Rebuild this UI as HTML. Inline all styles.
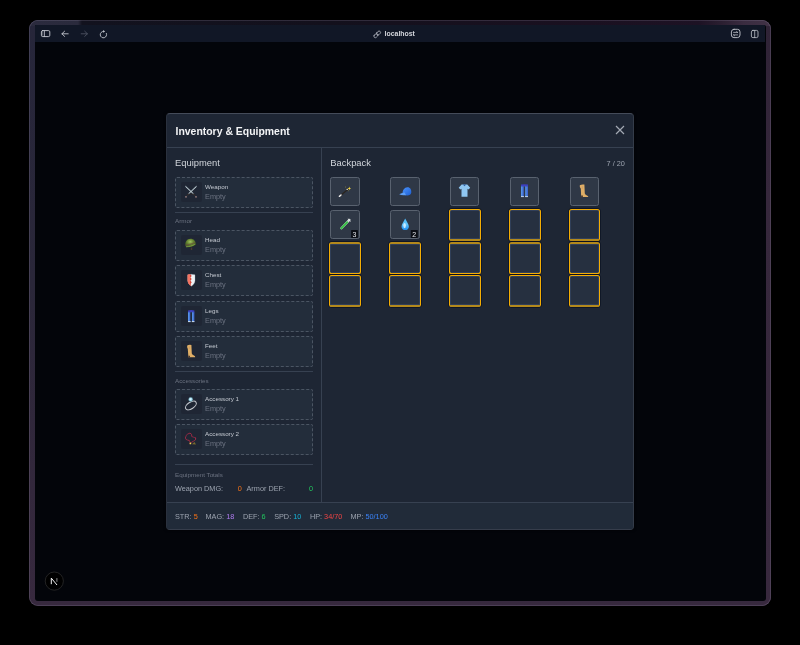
<!DOCTYPE html>
<html><head><meta charset="utf-8">
<style>
*{box-sizing:border-box;margin:0;padding:0}
html,body{width:800px;height:645px;overflow:hidden;background:#000}
body{position:relative;font-family:"Liberation Sans",sans-serif;-webkit-font-smoothing:antialiased}
.abs{position:absolute}
#frame{left:29px;top:20px;width:742px;height:586.4px;border-radius:9px;
  background:linear-gradient(180deg,#26263a 0%,#2a2739 45%,#33283c 80%,#37293e 100%);overflow:hidden}
#fright{right:0;top:0;width:8px;height:586.4px;background:linear-gradient(180deg,#2f2336 0%,#36283c 30%,#38293e 100%)}
#ftop{left:0;top:0;width:742px;height:6px;background:linear-gradient(90deg,#2b2b3e 0px,#2a2a3c 49px,#12121e 53px,#13101c 300px,#1a1020 560px,#1d1224 670px,#2c2032 695px,#3a2c40 715px,#413246 742px)}
#fhl{left:29px;top:20px;width:742px;height:586.4px;border-radius:9px;box-shadow:inset 0 0 0 .8px rgba(160,150,180,.28)}
#inner{left:35px;top:25px;width:730.5px;height:575.6px;background:#03050a;border-radius:1px 2px 3px 3px;overflow:hidden}
#toolbar{left:0;top:0;width:730px;height:17px;background:#111726}
.t{position:absolute;white-space:nowrap;line-height:1}
#modal{will-change:transform;left:166px;top:113px;width:468px;height:417px;background:#1e2634;border:1px solid #3f4756;border-color:#444b59 #343c49 #363d4b #2a313e;box-shadow:0 0 3px rgba(0,0,0,.7);border-radius:4px;overflow:hidden}
.hline{position:absolute;height:1px;background:#374151}
.slot{position:absolute;left:8px;width:138px;height:31px;border:1px dashed #4b5563;border-radius:2px;background:#232d3b}
.ico{position:absolute;left:5px;top:4.4px;width:20.5px;height:19.6px;background:#1f2634;border-radius:2px}
.lbl{position:absolute;left:29px;top:6.3px;font-size:6.26px;color:#c4c9d1;line-height:1;white-space:nowrap}
.emp{position:absolute;left:29.1px;top:15px;font-size:7.3px;color:#6b7280;line-height:1;white-space:nowrap}
.cell{position:absolute;width:29.4px;height:29.3px;border:1.2px solid #59626f;background:#2f3846;border-radius:2.5px}
.ecell{position:absolute;width:31.6px;height:31.8px;border:1.5px solid #f4ad04;background:#263040;border-radius:2.6px;box-shadow:0 0 0 .7px rgba(6,12,30,.75),inset 0 0 0 .7px rgba(70,95,140,.45)}
.dk-b{border-bottom:2px solid #b3891c}
.dk-t{border-top:2px solid #b3891c}
.badge{position:absolute;right:1px;bottom:1px;width:8px;height:8px;background:#0b0f17;color:#e5e7eb;font-size:6.5px;line-height:8px;text-align:center;border-radius:1px}
</style></head>
<body>
<div id="frame" class="abs"><div id="fright" class="abs"></div><div id="ftop" class="abs"></div></div>
<div id="fhl" class="abs"></div>
<div id="inner" class="abs">
  <div id="toolbar" class="abs"></div>
</div>
<svg class="abs" style="left:0;top:0;will-change:transform" width="800" height="50" viewBox="0 0 800 50">
  <g fill="none" stroke-linecap="round" stroke-linejoin="round">
    <!-- sidebar -->
    <rect x="41.4" y="30.6" width="8.4" height="6" rx="1.3" stroke="#c9ccd4" stroke-width="0.9"/>
    <line x1="44.4" y1="30.8" x2="44.4" y2="36.4" stroke="#c9ccd4" stroke-width="0.8"/>
    <line x1="42.7" y1="32" x2="42.7" y2="35.3" stroke="#8a8e98" stroke-width="0.6"/>
    <!-- back -->
    <path d="M68.2 33.8H61.9M64.6 31.2L61.9 33.8L64.6 36.4" stroke="#c3c6ce" stroke-width="0.9"/>
    <!-- forward -->
    <path d="M81.2 33.8H87.4M84.7 31.2L87.4 33.8L84.7 36.4" stroke="#4e5363" stroke-width="0.9"/>
    <!-- reload -->
    <path d="M103.4 31.4A3.2 3.2 0 1 0 106.4 33.4" stroke="#c3c6ce" stroke-width="0.9"/>
    <path d="M103.1 30L105.1 31.4L103.1 32.8Z" fill="#c3c6ce"/>
    <!-- link -->
    <g transform="translate(377.2 34.35) rotate(-45)">
      <rect x="-4.1" y="-1.45" width="4.6" height="2.9" rx="1.45" stroke="#b9bcc6" stroke-width="0.75"/>
      <rect x="-0.5" y="-1.45" width="4.6" height="2.9" rx="1.45" stroke="#b9bcc6" stroke-width="0.75"/>
    </g>
    <!-- settings -->
    <rect x="731.4" y="29.3" width="8.6" height="8.3" rx="2.6" stroke="#c3c6ce" stroke-width="0.9"/>
    <path d="M733.6 32.4H737.6M736.6 31.5L737.6 32.4M737.6 34.9H733.6M734.6 35.8L733.6 34.9" stroke="#c3c6ce" stroke-width="0.75"/>
    <!-- split -->
    <rect x="751.4" y="30.4" width="6.6" height="7.2" rx="1.5" stroke="#c3c6ce" stroke-width="0.8"/>
    <line x1="754.7" y1="30.6" x2="754.7" y2="37.4" stroke="#c3c6ce" stroke-width="0.75"/>
  </g>
  <text x="384.6" y="36" font-family="Liberation Sans" font-weight="700" font-size="6.9" fill="#d4d6dc">localhost</text>
</svg>
<div id="modal" class="abs">
  <!-- header -->
  <div class="t" style="left:8.5px;top:12.9px;font-size:10.44px;font-weight:700;color:#f3f4f6">Inventory &amp; Equipment</div>
  <svg class="abs" style="left:448px;top:11.4px" width="10" height="10" viewBox="0 0 10 10"><path d="M1 1L9 9M9 1L1 9" stroke="#a3a9b3" stroke-width="1.15" fill="none"/></svg>
  <div class="hline" style="left:0;top:33px;width:468px"></div>

  <!-- left panel -->
  <div class="abs" style="left:154px;top:34px;width:1px;height:354px;background:#374151"></div>
  <div class="t" style="left:8px;top:44.2px;font-size:9.4px;color:#d1d5db">Equipment</div>

  <div class="slot" style="top:63px"><div class="ico"></div><div class="lbl">Weapon</div><div class="emp">Empty</div></div>
  <div class="hline" style="left:8px;top:98px;width:138px"></div>
  <div class="t" style="left:8px;top:104.3px;font-size:6.26px;color:#6b7280">Armor</div>
  <div class="slot" style="top:116px"><div class="ico"></div><div class="lbl">Head</div><div class="emp">Empty</div></div>
  <div class="slot" style="top:151px"><div class="ico"></div><div class="lbl">Chest</div><div class="emp">Empty</div></div>
  <div class="slot" style="top:187px"><div class="ico"></div><div class="lbl">Legs</div><div class="emp">Empty</div></div>
  <div class="slot" style="top:222px"><div class="ico"></div><div class="lbl">Feet</div><div class="emp">Empty</div></div>
  <div class="hline" style="left:8px;top:257px;width:138px"></div>
  <div class="t" style="left:8px;top:263.7px;font-size:6.26px;color:#6b7280">Accessories</div>
  <div class="slot" style="top:275px"><div class="ico"></div><div class="lbl">Accessory 1</div><div class="emp">Empty</div></div>
  <div class="slot" style="top:310px"><div class="ico"></div><div class="lbl">Accessory 2</div><div class="emp">Empty</div></div>
  <div class="hline" style="left:8px;top:350px;width:138px"></div>
  <div class="t" style="left:8px;top:357.7px;font-size:6.26px;color:#6b7280">Equipment Totals</div>
  <div class="t" style="left:8px;top:370.8px;font-size:7.3px;color:#9ca3af">Weapon DMG:</div>
  <div class="t" style="left:70.7px;top:370.8px;font-size:7.3px;color:#f97316">0</div>
  <div class="t" style="left:79.5px;top:370.8px;font-size:7.3px;color:#9ca3af">Armor DEF:</div>
  <div class="t" style="left:141.9px;top:370.8px;font-size:7.3px;color:#22c55e">0</div>

  <!-- backpack -->
  <div class="t" style="left:163.3px;top:44.2px;font-size:9.4px;color:#d1d5db">Backpack</div>
  <div class="t" style="left:439.6px;top:45.8px;font-size:7.3px;color:#9ca3af">7 / 20</div>

  <div class="cell" style="left:163.40px;top:63.0px"><!--wand--></div>
  <div class="cell" style="left:223.25px;top:63.0px"><!--cap--></div>
  <div class="cell" style="left:283.10px;top:63.0px"><!--shirt--></div>
  <div class="cell" style="left:342.95px;top:63.0px"><!--jeans--></div>
  <div class="cell" style="left:402.80px;top:63.0px"><!--boot--></div>
  <div class="cell" style="left:163.40px;top:96.0px"><!--tube--></div>
  <div class="cell" style="left:223.25px;top:96.0px"><!--drop--></div>
  <div class="ecell dk-b" style="left:282.10px;top:95.0px"></div>
  <div class="ecell dk-b" style="left:341.95px;top:95.0px"></div>
  <div class="ecell dk-b" style="left:401.80px;top:95.0px"></div>
  <div class="ecell dk-t" style="left:162.40px;top:128.0px"></div>
  <div class="ecell dk-t" style="left:222.25px;top:128.0px"></div>
  <div class="ecell dk-t" style="left:282.10px;top:128.0px"></div>
  <div class="ecell dk-t" style="left:341.95px;top:128.0px"></div>
  <div class="ecell dk-t" style="left:401.80px;top:128.0px"></div>
  <div class="ecell dk-b" style="left:162.40px;top:161.0px"></div>
  <div class="ecell dk-b" style="left:222.25px;top:161.0px"></div>
  <div class="ecell dk-b" style="left:282.10px;top:161.0px"></div>
  <div class="ecell dk-b" style="left:341.95px;top:161.0px"></div>
  <div class="ecell dk-b" style="left:401.80px;top:161.0px"></div>

  <!-- footer -->
  <div class="hline" style="left:0;top:388px;width:468px"></div>
  <div class="abs" style="left:0;top:389px;width:468px;height:28px;background:#212b39"></div>
  <div class="t" style="left:8px;top:398.5px;font-size:7.3px;color:#9ca3af">STR: <span style="color:#f97316">5</span></div>
  <div class="t" style="left:38.45px;top:398.5px;font-size:7.3px;color:#9ca3af">MAG: <span style="color:#b07cf0">18</span></div>
  <div class="t" style="left:75.9px;top:398.5px;font-size:7.3px;color:#9ca3af">DEF: <span style="color:#22c55e">6</span></div>
  <div class="t" style="left:107.15px;top:398.5px;font-size:7.3px;color:#9ca3af">SPD: <span style="color:#16b2d4">10</span></div>
  <div class="t" style="left:142.9px;top:398.5px;font-size:7.3px;color:#9ca3af">HP: <span style="color:#ef4444">34/70</span></div>
  <div class="t" style="left:183.45px;top:398.5px;font-size:7.3px;color:#9ca3af">MP: <span style="color:#3b82f6">50/100</span></div>
</div>


<svg class="abs" style="left:0;top:0;pointer-events:none;will-change:transform" width="800" height="645" viewBox="0 0 800 645">
  <defs>
    <radialGradient id="gHelm" cx="0.45" cy="0.35" r="0.7">
      <stop offset="0" stop-color="#a4c462"/><stop offset="0.45" stop-color="#62822f"/><stop offset="1" stop-color="#34481e"/>
    </radialGradient>
    <linearGradient id="gDrop" x1="0" y1="0" x2="0" y2="1">
      <stop offset="0" stop-color="#4ab8f8"/><stop offset="0.5" stop-color="#62c4fa"/><stop offset="1" stop-color="#1a8aee"/>
    </linearGradient>
    <linearGradient id="gCap" x1="0" y1="0" x2="1" y2="1">
      <stop offset="0" stop-color="#4a94ff"/><stop offset="1" stop-color="#1f5fd0"/>
    </linearGradient>
    <linearGradient id="gJeans" x1="0" y1="0" x2="1" y2="0">
      <stop offset="0" stop-color="#5b9cf0"/><stop offset="1" stop-color="#3a5fc8"/>
    </linearGradient>
  </defs>
  <!-- Weapon: crossed swords -->
  <g stroke-linecap="round">
    <line x1="185.8" y1="186.6" x2="193.4" y2="193.8" stroke="#3c4652" stroke-width="1.7"/>
    <line x1="196.2" y1="186.6" x2="188.6" y2="193.8" stroke="#3c4652" stroke-width="1.7"/>
    <line x1="185.8" y1="186.6" x2="193.2" y2="193.6" stroke="#cfdde3" stroke-width="1"/>
    <line x1="196.2" y1="186.6" x2="188.8" y2="193.6" stroke="#cfdde3" stroke-width="1"/>
    <path d="M187.4 194.6Q191 193 194.6 194.6" fill="none" stroke="#2a2220" stroke-width="0.7"/>
    <line x1="193.6" y1="194.2" x2="195.4" y2="196" stroke="#3e3430" stroke-width="0.8"/>
    <line x1="188.4" y1="194.2" x2="186.6" y2="196" stroke="#3e3430" stroke-width="0.8"/>
    <circle cx="186" cy="196.8" r="0.9" fill="#9a7e7e"/>
    <circle cx="196" cy="196.8" r="0.9" fill="#9a7e7e"/>
  </g>
  <!-- Head: helmet -->
  <g>
    <path d="M185.4 246.4C184.8 242 186.8 238.9 190.4 238.8C193.6 238.7 195.6 241 195.8 243.8L196.2 244.6L194.4 245.6C192 247.2 188.2 247.8 185.4 246.4Z" fill="url(#gHelm)"/>
    <path d="M185.6 245.2C188.6 244.8 191.6 243.9 195 242.6" fill="none" stroke="#6e4a44" stroke-width="0.7"/>
    <path d="M186 246.8C189 246.8 192.2 245.8 194.8 244.4" fill="none" stroke="#86aa4a" stroke-width="0.8"/>
    <rect x="190.8" y="247.6" width="1.4" height="2.4" fill="#4a3a2e"/>
  </g>
  <!-- Chest: shield -->
  <g>
    <path d="M187.7 274.8Q191.3 273.8 195 274.8L195 280.6Q195 284 191.3 286.2Q187.7 284 187.7 280.6Z" fill="#edf1f4" stroke="#9aa4ac" stroke-width="0.3"/>
    <path d="M187.7 274.8Q189 274.3 190.4 274.2L191.7 275.9L190.4 277.5L191.7 279.1L190.4 280.7L191.7 282.3L190.6 284L191.3 286.2Q187.7 284 187.7 280.6Z" fill="#d9473a"/>
    <path d="M187.7 274.8Q188.9 274.4 190 274.25L190 285.2Q187.7 283.6 187.7 280.6Z" fill="#f47462"/>
  </g>
  <!-- Legs: jeans -->
  <g>
    <path d="M188 310.4Q191.2 309.6 194.4 310.4V312.6H188Z" fill="#3d40c0"/>
    <path d="M188 312.2H190.6V321.9H188Z" fill="url(#gJeans)"/>
    <path d="M191.8 312.2H194.4V321.9H191.8Z" fill="url(#gJeans)"/>
    <rect x="190.6" y="312.4" width="1.2" height="9.5" fill="#1f2634"/>
    <rect x="188" y="321" width="2.6" height="1.1" fill="#c0d4ea"/>
    <rect x="191.8" y="321" width="2.6" height="1.1" fill="#c0d4ea"/>
  </g>
  <!-- Feet: boot -->
  <g>
    <path d="M187.2 345.4Q189 344.6 191.4 345L191.8 353.6Q192.4 355 194 355.4Q195.4 356 195.2 357.3H188.4L187.8 349Q186.8 347 187.2 345.4Z" fill="#dfae66"/>
    <path d="M188.3 355.8H190V357.8H188.3Z" fill="#4a3a30"/>
    <line x1="189.4" y1="346.6" x2="189.4" y2="349" stroke="#b89070" stroke-width="0.5"/>
  </g>
  <!-- Accessory 1: ring -->
  <g>
    <ellipse cx="190.9" cy="405.5" rx="6.1" ry="3.3" transform="rotate(-33 190.9 405.5)" fill="none" stroke="#c2c6cc" stroke-width="1.1"/>
    <circle cx="190.7" cy="399.4" r="2.1" fill="#a8e2f6" stroke="#4a6a78" stroke-width="0.5"/><circle cx="190.4" cy="399.1" r="0.9" fill="#e0f8ff"/>
  </g>
  <!-- Accessory 2: prayer beads -->
  <g>
    <path d="M190.4 443.4L189.3 440.5L186.5 439.8L185.3 438L186.3 435.5L187.2 434.2L189.8 433.2L191.5 434L191.8 436.5L193.5 437.2L195.7 437.8L195.5 440L193.5 441.2L191.5 442.3Z" fill="none" stroke="#b62c4a" stroke-width="1" stroke-dasharray="0.9 0.3"/>
    <circle cx="190.4" cy="443.4" r="0.9" fill="#f0d050"/>
    <path d="M192 444.2L194.4 442L196 444.6Z" fill="#7a6a2e"/>
  </g>

  <!-- Backpack: wand -->
  <g stroke-linecap="round">
    <line x1="339.6" y1="196.2" x2="349" y2="188.4" stroke="#2a2520" stroke-width="1.3"/>
    <line x1="339.4" y1="196.3" x2="341" y2="195" stroke="#ececec" stroke-width="1.5"/>
    <path d="M349.3 186.6L349.8 188L351.2 188.4L349.8 188.9L349.3 190.3L348.8 188.9L347.4 188.4L348.8 188Z" fill="#f2d440"/>
    <circle cx="347.2" cy="189.4" r="0.7" fill="#f5f0d0"/>
    <circle cx="345.6" cy="187" r="0.4" fill="#c8b040"/>
    <circle cx="348.4" cy="190.8" r="0.4" fill="#c8b040"/>
  </g>
  <!-- cap -->
  <g>
    <path d="M402.6 194.6C402.2 190 404.6 187.3 407.4 187.2C410.2 187.1 411.6 189.6 411.3 192.6C411.1 194.6 409.6 195.4 407 195.4C405.2 195.4 403.6 195.2 402.6 194.6Z" fill="url(#gCap)"/>
    <path d="M404.6 192.6Q401 193.2 399.2 194.2Q401.4 195.8 406 195.2Z" fill="#5d9ff5"/>
  </g>
  <!-- shirt -->
  <g>
    <path d="M461.6 184.6L458.7 187.7L460.4 189.6L461.5 188.8L461.5 196.8H467.5L467.5 188.8L468.6 189.6L470.2 187.7L467.3 184.6Z" fill="#8fc6f1"/>
    <path d="M462.8 184.4L464.5 186.2L466.2 184.4Z" fill="#2a5aa0"/>
  </g>
  <!-- jeans -->
  <g>
    <path d="M521 184.6Q524.5 183.9 528 184.6V186.8H521Z" fill="#3d40c0"/>
    <path d="M521 186.4H523.9V197H521Z" fill="url(#gJeans)"/>
    <path d="M525.1 186.4H528V197H525.1Z" fill="url(#gJeans)"/>
    <rect x="523.9" y="186.8" width="1.2" height="10.2" fill="#2f3846"/>
    <rect x="521" y="196.1" width="2.9" height="1" fill="#c0d4ea"/>
    <rect x="525.1" y="196.1" width="2.9" height="1" fill="#c0d4ea"/>
  </g>
  <!-- boot -->
  <g>
    <path d="M579.8 185.2Q581.6 184.2 584.4 184.6L584.8 193.6Q585.4 195 587 195.5Q588.4 196 588.3 197.1H581.2L580.8 188.8Q579.4 186.8 579.8 185.2Z" fill="#dfae66"/>
    <path d="M581.1 195.6H582.9V197.5H581.1Z" fill="#4a3a30"/>
    <line x1="582.3" y1="186.2" x2="582.3" y2="188.8" stroke="#b89070" stroke-width="0.5"/>
  </g>
  <!-- test tube -->
  <g stroke-linecap="round">
    <line x1="341.4" y1="228.2" x2="349.4" y2="219.9" stroke="#cfd6d6" stroke-width="2.3"/>
    <line x1="341.4" y1="228.2" x2="347.2" y2="222.2" stroke="#3cc04a" stroke-width="2"/>
    <line x1="348.2" y1="219" x2="350.4" y2="221.1" stroke="#e4e8e8" stroke-width="0.9"/>
  </g>
  <rect x="351.1" y="230" width="6.8" height="7.9" rx="0.6" fill="#0b0e14"/>
  <text x="354.5" y="236.6" text-anchor="middle" font-family="Liberation Sans" font-size="7" fill="#e5e7eb">3</text>
  <!-- drop -->
  <path d="M405.2 218.4C406.4 221 408.9 224.2 408.9 226.4C408.9 228.6 407.2 230.1 405.2 230.1C403.2 230.1 401.5 228.6 401.5 226.4C401.5 224.2 404 221 405.2 218.4Z" fill="url(#gDrop)"/>
  <ellipse cx="404.6" cy="225.6" rx="1.3" ry="2.6" fill="#f2fbff" opacity="0.75"/>
  <rect x="410.8" y="230" width="7" height="7.9" rx="0.6" fill="#0b0e14"/>
  <text x="414.3" y="236.6" text-anchor="middle" font-family="Liberation Sans" font-size="7" fill="#e5e7eb">2</text>

  <!-- N logo -->
  <circle cx="54.3" cy="581.1" r="9.1" fill="#000" stroke="#2c2c2c" stroke-width="0.8"/>
  <path d="M51.3 584.2V578.1L57 585" fill="none" stroke="#f2f2f2" stroke-width="1"/>
  <line x1="56.9" y1="578.1" x2="56.9" y2="581.8" stroke="#9a9a9a" stroke-width="0.9"/>
</svg>
</body></html>
